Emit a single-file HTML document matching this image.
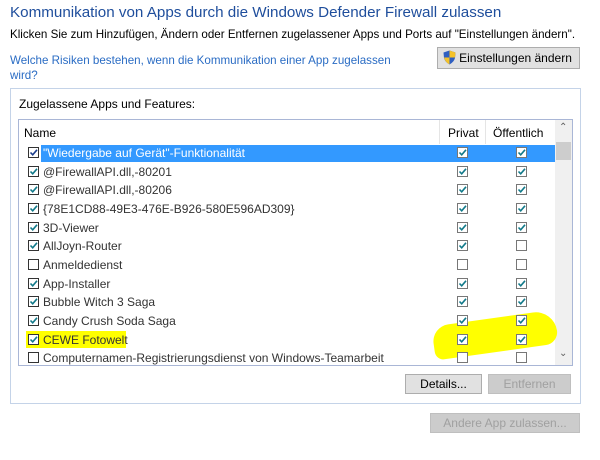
<!DOCTYPE html>
<html><head><meta charset="utf-8"><style>
*{margin:0;padding:0;box-sizing:border-box}
body{width:600px;height:460px;background:#fff;font-family:"Liberation Sans",sans-serif;font-size:12px;color:#000;position:relative;overflow:hidden}
.a{position:absolute;white-space:nowrap}
.btn{position:absolute;border:1px solid #adadad;background:#e1e1e1;text-align:center;line-height:19px;font-size:12px}
.dis{color:#a0a0a0;background:#cccccc;border-color:#bfbfbf}
.cb{position:absolute;width:11px;height:11px;border:1px solid #333;background:#fff}
.cb.g{border-color:#777}
.cb svg{position:absolute;left:0;top:0}
</style></head><body>
<div class="a" style="left:10px;top:4px;font-size:15.2px;color:#1f4e9c">Kommunikation von Apps durch die Windows Defender Firewall zulassen</div>
<div class="a" style="left:10px;top:28px;font-size:11.6px">Klicken Sie zum Hinzufügen, Ändern oder Entfernen zugelassener Apps und Ports auf "Einstellungen ändern".</div>
<div class="a" style="left:10px;top:53px;color:#2a6cc4;line-height:15px;white-space:normal;width:400px;font-size:11.6px">Welche Risiken bestehen, wenn die Kommunikation einer App zugelassen wird?</div>
<div class="btn" style="left:437px;top:47px;width:143px;height:22px;line-height:20px;padding-left:14px">Einstellungen ändern</div>
<svg class="a" style="left:443px;top:50px" width="13" height="15" viewBox="0 0 13 15"><path d="M6.5 0.5 L12.5 2.5 L12 8 Q11 12 6.5 14.5 Q2 12 1 8 L0.5 2.5Z" fill="#2f5fc1"/><path d="M6.5 0.5 L12.5 2.5 L12 7.5 L6.5 7.5Z" fill="#f4c22a"/><path d="M6.5 7.5 L1 7.5 Q2 12 6.5 14.5Z" fill="#f4c22a"/></svg>
<div class="a" style="left:10px;top:88px;width:571px;height:316px;border:1px solid #c4d3e8"></div>
<div class="a" style="left:19px;top:97px">Zugelassene Apps und Features:</div>
<div class="a" style="left:18px;top:119px;width:555px;height:247px;border:1px solid #a9b6d6;overflow:hidden">
 <div class="a" style="left:420px;top:0;width:1px;height:24px;background:#e5e5e5"></div>
 <div class="a" style="left:466px;top:0;width:1px;height:24px;background:#e5e5e5"></div>
 <div class="a" style="left:5px;top:6px">Name</div>
 <div class="a" style="left:429px;top:6px">Privat</div>
 <div class="a" style="left:474px;top:6px">Öffentlich</div>
 <div class="a" style="left:536px;top:0;width:17px;height:247px;background:#f0f0f0"></div>
 <div class="a" style="left:537px;top:22px;width:15px;height:18px;background:#cdcdcd"></div>
 <div class="a" style="left:540px;top:2px;color:#606060;font-size:10px">&#8963;</div>
 <div class="a" style="left:540px;top:228px;color:#606060;font-size:10px">&#8964;</div>
</div>
<div class="a" style="left:433px;top:318px;width:124px;height:34px;background:#ffff00;border-radius:40px 50px 30px 20px;transform:rotate(-8deg)"></div>
<div class="a" style="left:26px;top:331px;width:100px;height:17px;background:#ffff00"></div>
<div id="rows"></div>
<div class="btn" style="left:405px;top:374px;width:77px;height:20px">Details...</div>
<div class="btn dis" style="left:488px;top:374px;width:83px;height:20px">Entfernen</div>
<div class="btn dis" style="left:430px;top:413px;width:150px;height:20px">Andere App zulassen...</div>
<script>
var d=[["\"Wiedergabe auf Gerät\"-Funktionalität",1,1,1],["@FirewallAPI.dll,-80201",1,1,1],["@FirewallAPI.dll,-80206",1,1,1],["{78E1CD88-49E3-476E-B926-580E596AD309}",1,1,1],["3D-Viewer",1,1,1],["AllJoyn-Router",1,1,0],["Anmeldedienst",0,0,0],["App-Installer",1,1,1],["Bubble Witch 3 Saga",1,1,1],["Candy Crush Soda Saga",1,1,1],["CEWE Fotowelt",1,1,1],["Computernamen-Registrierungsdienst von Windows-Teamarbeit",0,0,0]];
var h="";var ck='<svg width="9" height="9" viewBox="0 0 9 9"><path d="M1.5 4.5 L3.7 6.8 L8 1.8" stroke="#127a8a" stroke-width="1.6" fill="none"/></svg>';
var ckb='<svg width="9" height="9" viewBox="0 0 9 9"><path d="M1.5 4.5 L3.7 6.8 L8 1.8" stroke="#1d3f8c" stroke-width="1.6" fill="none"/></svg>';
d.forEach(function(r,i){var y=Math.round(144+i*18.67);
if(i==0)h+='<div class="a" style="left:41px;top:'+(y+1)+'px;width:514px;height:17px;background:#3399ff"></div>';
h+='<div class="cb" style="left:28px;top:'+(y+3)+'px">'+(r[1]?(i==0?ckb:ck):'')+'</div>';
h+='<div class="a" style="left:43px;top:'+(y+2)+'px;color:'+(i==0?'#fff':'#333')+'">'+r[0]+'</div>';
h+='<div class="cb g" style="left:457px;top:'+(y+3)+'px">'+(r[2]?ck:'')+'</div>';
h+='<div class="cb g" style="left:516px;top:'+(y+3)+'px">'+(r[3]?ck:'')+'</div>';});
document.getElementById("rows").innerHTML=h;
</script>
</body></html>
